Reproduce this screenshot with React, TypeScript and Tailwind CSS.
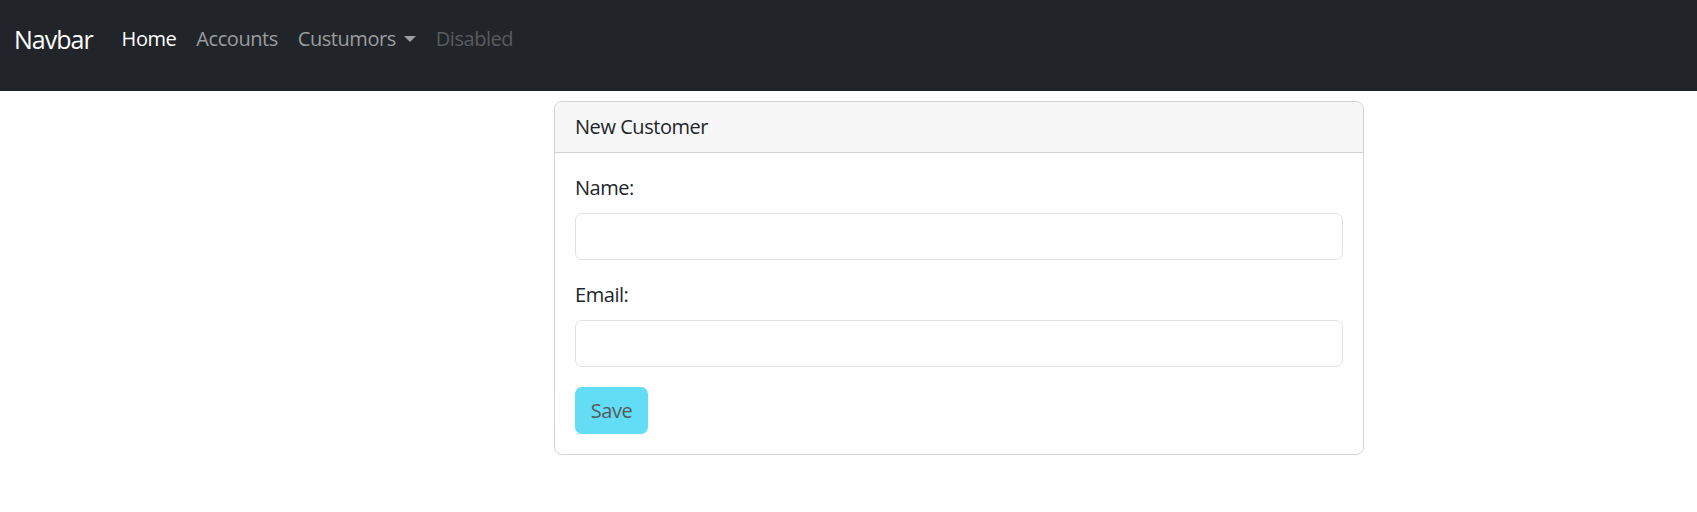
import React from "react";

export default function App() {
  const font = { fontFamily: '"Open Sans", "Noto Sans", "Liberation Sans", sans-serif' };
  return (
    <div className="min-h-[512px] bg-white tracking-[-0.45px] text-[#212529]" style={font}>
      <nav className="h-[91px] bg-[#212529]">
        <div className="flex h-[78px] items-center pl-[14px]">
          <a className="mr-[19px] text-[25px] leading-[37px] tracking-[-1px] text-white">Navbar</a>
          <ul className="flex items-center text-[20px] leading-[30px]">
            <li><a className="block px-[10px] text-white">Home</a></li>
            <li><a className="block px-[10px] text-[#9b9d9f]">Accounts</a></li>
            <li>
              <a className="flex items-center px-[10px] text-[#9b9d9f]">
                Custumors
                <span className="ml-[8px] h-0 w-0 border-x-[6px] border-t-[6px] border-x-transparent border-t-[#9b9d9f]" />
              </a>
            </li>
            <li><a className="block px-[10px] text-[#585b5e]">Disabled</a></li>
          </ul>
        </div>
      </nav>
      <div className="ml-[554px] mt-[10px] w-[810px] rounded-[8px] border border-[#d3d3d4]">
        <div className="rounded-t-[8px] border-b border-[#d3d3d4] bg-[#f7f7f7] px-[20px] py-[10px] text-[20px] leading-[30px]">
          New Customer
        </div>
        <div className="p-[20px] text-[20px] leading-[30px]">
          <label className="mb-[10px] block">Name:</label>
          <input className="mb-[20px] block h-[47px] w-full rounded-[7px] border border-[#dee2e6] px-[15px]" />
          <label className="mb-[10px] block">Email:</label>
          <input className="mb-[20px] block h-[47px] w-full rounded-[7px] border border-[#dee2e6] px-[15px]" />
          <button disabled className="h-[47px] w-[73px] rounded-[7px] bg-[#62ddf5] text-[20px] text-[#595959]">
            Save
          </button>
        </div>
      </div>
    </div>
  );
}
